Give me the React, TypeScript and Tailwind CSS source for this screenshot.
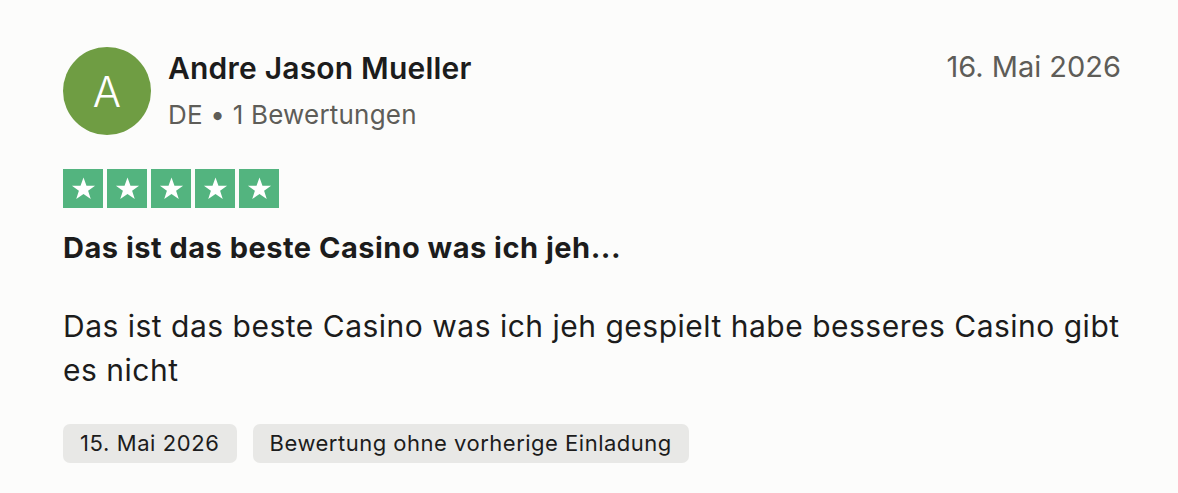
const stars = [0, 1, 2, 3, 4];

function Star() {
  return (
    <svg viewBox="0 0 24 24" className="w-[27px] h-[27px]" fill="#ffffff">
      <path d="M12 2.3l2.65 7.25h7.65l-6.2 4.5 2.35 7.35L12 16.9l-6.45 4.5 2.35-7.35-6.2-4.5h7.65z" />
    </svg>
  );
}

export default function App() {
  return (
    <div className="min-h-screen bg-[#fcfcfb] text-[#1c1c1c]" style={{ fontFamily: "Inter, 'Liberation Sans', sans-serif" }}>
      <article className="pl-[63px] pr-[57px] pt-[47px]">
        <header className="flex items-start justify-between">
          <div className="flex items-start gap-[17px]">
            <div className="w-[88px] h-[88px] rounded-full bg-[#6f9d43] flex items-center justify-center text-white text-[42px] font-light">
              A
            </div>
            <div className="flex flex-col pt-[1px]">
              <span className="text-[30px] font-semibold leading-[40px] tracking-[0.2px]">Andre Jason Mueller</span>
              <span className="mt-[7px] text-[26px] leading-[40px] text-[#5e5d58] tracking-[0.2px]">DE • 1 Bewertungen</span>
            </div>
          </div>
          <span className="text-[29px] leading-[40px] text-[#5e5d58]">16. Mai 2026</span>
        </header>

        <div className="flex gap-[4px] mt-[34px]">
          {stars.map((i) => (
            <div key={i} className="w-[40px] h-[39px] bg-[#53b47f] flex items-center justify-center">
              <Star />
            </div>
          ))}
        </div>

        <h2 className="mt-[22px] text-[29px] font-bold leading-[36px] tracking-[0.5px]">
          Das ist das beste Casino was ich jeh...
        </h2>

        <p className="mt-[38px] text-[30px] leading-[44px] tracking-[0.5px]">
          Das ist das beste Casino was ich jeh gespielt habe besseres Casino gibt es nicht
        </p>

        <div className="flex gap-[16px] mt-[32px]">
          <span className="px-[17px] h-[39px] flex items-center rounded-[7px] bg-[#e8e8e6] text-[22px] tracking-[0.6px]">
            15. Mai 2026
          </span>
          <span className="px-[17px] h-[39px] flex items-center rounded-[7px] bg-[#e8e8e6] text-[22px] tracking-[0.5px]">
            Bewertung ohne vorherige Einladung
          </span>
        </div>
      </article>
    </div>
  );
}
